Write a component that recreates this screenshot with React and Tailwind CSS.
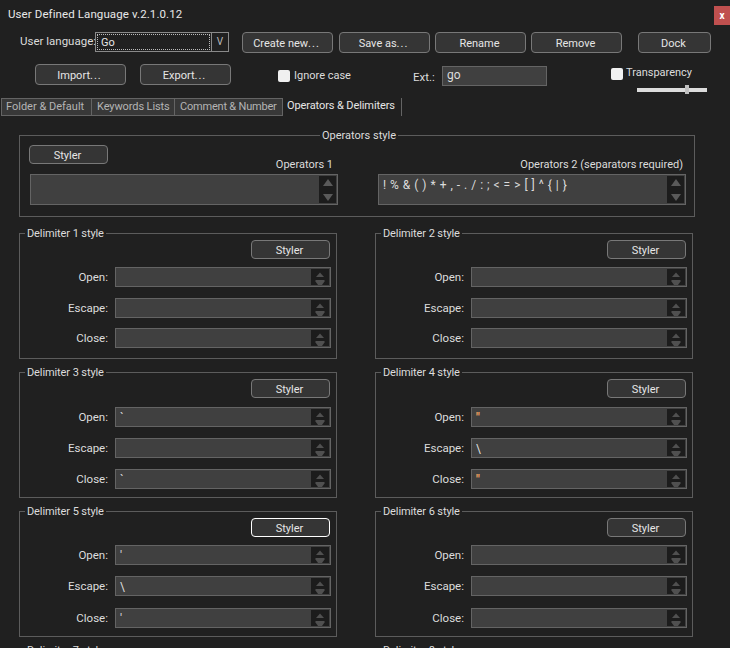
import React from "react";

const font = "font-['Roboto','Noto_Sans',sans-serif]";

function Btn({ children, className = "" }) {
  return (
    <button className={`h-[21px] whitespace-nowrap rounded-[4px] border border-[#787878] bg-[#353535] pr-[2px] pt-[2px] text-[11px] leading-none text-[#e6e6e6] ${className}`}>
      {children}
    </button>
  );
}

function Spin({ wide }) {
  return (
    <div className={`flex h-full shrink-0 items-center justify-center bg-[#1c1c1c] ${wide ? "w-[17px]" : "w-[18px]"}`}>
      <svg width="12" height={wide ? 26 : 18} viewBox={wide ? "0 0 12 26" : "0 0 12 18"} fill={wide ? "#5a5a5a" : "#505050"}>
        {wide ? (
          <>
            <path d="M6 2L11 9H1Z" />
            <path d="M1 17H11L6 24Z" />
          </>
        ) : (
          <>
            <path d="M6 4.5L10 9H2Z" />
            <path d="M1.5 12H10.5V13.5L8 17H4L1.5 13.5Z" />
          </>
        )}
      </svg>
    </div>
  );
}

function Field({ label, value, accent, className = "" }) {
  return (
    <div className={`flex items-center ${className}`}>
      <span className="w-[88px] pt-px text-right text-[11.5px] text-[#dcdcdc]">{label}</span>
      <div className="ml-[7px] flex h-[20px] w-[216px] border border-[#646464] bg-[#404040] p-px">
        <div className={`flex-1 pl-[3px] text-[12px] leading-[18px] ${accent ? "font-bold text-[#f0a060]" : "text-[#dcdcdc]"}`}>{value}</div>
        <Spin />
      </div>
    </div>
  );
}

function Delimiter({ n, open, esc, close, accent, focused, gaps }) {
  return (
    <fieldset className="h-[133px] w-[318px] border border-[#5c5c5c]">
      <legend className="ml-[5px] h-[14px] px-[2px] text-[11px] leading-[15px] tracking-[-0.1px] text-[#dcdcdc]">Delimiter {n} style</legend>
      <div className="flex justify-end pr-[6px]">
        <Btn className={`!h-[19px] w-[79px] ${focused ? "!border-white" : ""}`}>Styler</Btn>
      </div>
      <Field label="Open:" value={open} accent={accent} className={gaps[0]} />
      <Field label="Escape:" value={esc} className={gaps[1]} />
      <Field label="Close:" value={close} accent={accent} className={gaps[2]} />
    </fieldset>
  );
}

function OpBox({ value }) {
  return (
    <div className="flex h-[31px] w-[308px] border border-[#646464] bg-[#404040] p-px">
      <div className="flex-1 pl-[3px] text-[12px] leading-[18px] tracking-[0.5px] text-[#dcdcdc]">{value}</div>
      <Spin wide />
    </div>
  );
}

export default function App() {
  return (
    <div className={`h-[648px] w-[730px] overflow-hidden whitespace-nowrap bg-[#202020] ${font}`}>
      <div className="flex h-[32px] items-start justify-between">
        <span className="ml-[8px] mt-[5px] text-[11.5px] leading-[18px] tracking-[0.1px] text-[#e8e8e8]">User Defined Language v.2.1.0.12</span>
        <div className="mt-[6px] flex h-[19px] w-[16px] items-center justify-center bg-[#c0504f] text-[10px] font-bold leading-none text-white">x</div>
      </div>

      <div className="flex h-[32px] items-start">
        <span className="ml-[20px] w-[75px] text-[11.5px] leading-[18px] text-[#dcdcdc]">User language:</span>
        <div className="flex h-[20px] w-[134px] border border-[#8a8a8a] bg-[#202020]">
          <div className="m-px flex-1 border border-dotted border-[#bbbbbb] pl-[3px] text-[11px] leading-[16px] text-[#e6e6e6]">Go</div>
          <div className="w-[17px] border-l border-[#8a8a8a] text-center text-[10px] leading-[17px] text-[#bbbbbb]">V</div>
        </div>
        <Btn className="ml-[13px] w-[91px]">Create new<span className="tracking-[1px]">...</span></Btn>
        <Btn className="ml-[6px] w-[91px]">Save as<span className="tracking-[1px]">...</span></Btn>
        <Btn className="ml-[5px] w-[91px]">Rename</Btn>
        <Btn className="ml-[5px] w-[91px]">Remove</Btn>
        <Btn className="ml-[16px] w-[73px]">Dock</Btn>
      </div>

      <div className="flex h-[34px] items-start">
        <Btn className="ml-[35px] w-[91px]">Import<span className="tracking-[1px]">...</span></Btn>
        <Btn className="ml-[14px] w-[91px]">Export<span className="tracking-[1px]">...</span></Btn>
        <div className="ml-[47px] mt-[6px] h-[12px] w-[12px] rounded-[2px] bg-[#f0f0f0]" />
        <span className="ml-[4px] mt-[3px] w-[119px] text-[11px] leading-[18px] text-[#dcdcdc]">Ignore case</span>
        <span className="mt-[4px] w-[29px] text-[11.5px] leading-[18px] text-[#dcdcdc]">Ext.:</span>
        <div className="mt-[2px] h-[20px] w-[105px] border border-[#646464] bg-[#404040] pl-[4px] text-[12px] leading-[17px] text-[#dcdcdc]">go</div>
        <div className="ml-[64px] flex flex-col">
          <div className="flex items-center">
            <div className="mt-[1px] h-[12px] w-[12px] rounded-[2px] bg-[#f0f0f0]" />
            <span className="ml-[3px] text-[11px] leading-[18px] text-[#dcdcdc]">Transparency</span>
          </div>
          <div className="ml-[26px] mt-[3px] flex h-[9px] w-[70px] items-center">
            <div className="h-[4px] w-[48px] bg-[#dcdcdc]" />
            <div className="h-[9px] w-[4px] bg-[#c0c0c0]" />
            <div className="h-[4px] flex-1 bg-[#dcdcdc]" />
          </div>
        </div>
      </div>

      <div className="ml-[1px] flex h-[18px] items-stretch text-[11px] leading-[16px]">
        <div className="w-[91px] border border-[#646464] bg-[#383838] pl-[4px] text-[#b4b4b4]">Folder &amp; Default</div>
        <div className="w-[83px] border border-l-0 border-[#646464] bg-[#383838] pl-[5px] tracking-[-0.1px] text-[#b4b4b4]">Keywords Lists</div>
        <div className="w-[108px] border border-l-0 border-[#646464] bg-[#383838] pl-[5px] tracking-[-0.2px] text-[#b4b4b4]">Comment &amp; Number</div>
        <div className="w-[119px] border-r border-[#646464] pl-[4px] tracking-[-0.1px] text-[#e6e6e6]">Operators &amp; Delimiters</div>
      </div>

      <fieldset className="ml-[19px] mt-[12px] h-[89px] w-[676px] border border-[#5c5c5c] pl-[10px] pt-[3px]">
        <legend className="ml-[290px] h-[14px] px-[2px] text-[11px] leading-[15px] text-[#dcdcdc]">Operators style</legend>
        <div className="flex">
          <div className="w-[308px]">
            <div className="flex h-[29px] items-start justify-between">
              <Btn className="!h-[19px] w-[79px] -ml-px">Styler</Btn>
              <span className="mr-[5px] mt-[11px] text-[11px] leading-[18px] text-[#dcdcdc]">Operators 1</span>
            </div>
            <OpBox value="" />
          </div>
          <div className="ml-[40px] w-[308px]">
            <div className="flex h-[29px] justify-end">
              <span className="mr-[3px] mt-[11px] text-[11px] leading-[18px] text-[#dcdcdc]">Operators 2 (separators required)</span>
            </div>
            <OpBox value="! % & ( ) * + , - . / : ; < = > [ ] ^ { | }" />
          </div>
        </div>
      </fieldset>

      <div className="ml-[19px] mt-[9px] grid grid-cols-[318px_318px] gap-x-[38px] gap-y-[6px]">
        <Delimiter n={1} open="" esc="" close="" gaps={["mt-[8px]", "mt-[11px]", "mt-[10px]"]} />
        <Delimiter n={2} open="" esc="" close="" gaps={["mt-[8px]", "mt-[11px]", "mt-[10px]"]} />
        <Delimiter n={3} open="`" esc="" close="`" gaps={["mt-[9px]", "mt-[11px]", "mt-[11px]"]} />
        <Delimiter n={4} open={'"'} esc="\" close={'"'} accent gaps={["mt-[9px]", "mt-[11px]", "mt-[11px]"]} />
        <Delimiter n={5} open="'" esc="\" close="'" focused gaps={["mt-[8px]", "mt-[11px]", "mt-[12px]"]} />
        <Delimiter n={6} open="" esc="" close="" gaps={["mt-[8px]", "mt-[11px]", "mt-[12px]"]} />
        <Delimiter n={7} open="" esc="" close="" gaps={["mt-[8px]", "mt-[11px]", "mt-[12px]"]} />
        <Delimiter n={8} open="" esc="" close="" gaps={["mt-[8px]", "mt-[11px]", "mt-[12px]"]} />
      </div>
    </div>
  );
}
